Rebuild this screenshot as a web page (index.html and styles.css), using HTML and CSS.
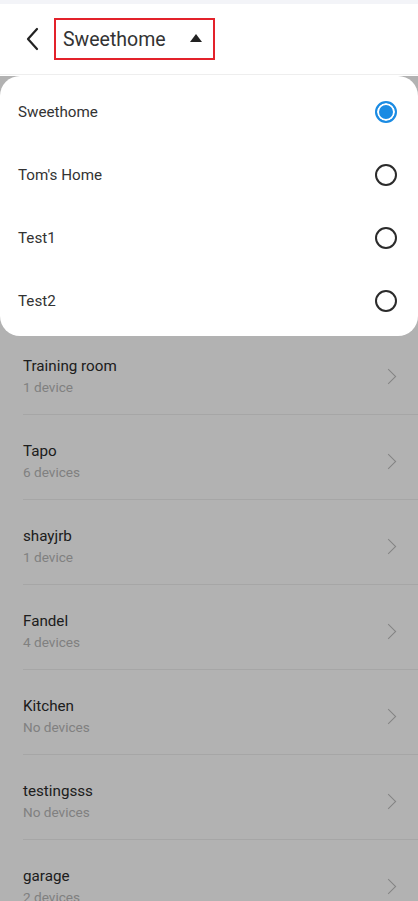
FILE: index.html
```html
<!DOCTYPE html>
<html lang="en">
<head>
  <meta charset="UTF-8" />
  <meta name="viewport" content="width=device-width, initial-scale=1.0" />
  <title>Rooms</title>
  <link rel="stylesheet" href="styles.css">
</head>
<body>
  <div class="statusbar"></div>
  <header class="topbar">
    <button class="back" aria-label="Back">
      <svg width="14" height="24" viewBox="0 0 14 24"><path d="M12 2 L3 12 L12 22" fill="none" stroke="#222" stroke-width="2.2" stroke-linecap="round" stroke-linejoin="round"/></svg>
    </button>
    <div class="home-picker">
      <span class="home-name">Sweethome</span>
      <span class="caret"></span>
    </div>
  </header>

  <div class="rooms">
    <div class="room">
      <div class="room-text"><div class="room-name">Training room</div><div class="room-count">1 device</div></div>
      <span class="chev"></span>
    </div>
    <div class="room">
      <div class="room-text"><div class="room-name">Tapo</div><div class="room-count">6 devices</div></div>
      <span class="chev"></span>
    </div>
    <div class="room">
      <div class="room-text"><div class="room-name">shayjrb</div><div class="room-count">1 device</div></div>
      <span class="chev"></span>
    </div>
    <div class="room">
      <div class="room-text"><div class="room-name">Fandel</div><div class="room-count">4 devices</div></div>
      <span class="chev"></span>
    </div>
    <div class="room">
      <div class="room-text"><div class="room-name">Kitchen</div><div class="room-count">No devices</div></div>
      <span class="chev"></span>
    </div>
    <div class="room">
      <div class="room-text"><div class="room-name">testingsss</div><div class="room-count">No devices</div></div>
      <span class="chev"></span>
    </div>
    <div class="room">
      <div class="room-text"><div class="room-name">garage</div><div class="room-count">2 devices</div></div>
      <span class="chev"></span>
    </div>
  </div>

  <div class="dim"></div>
  <div class="menu">
    <div class="menu-item"><span>Sweethome</span><span class="radio checked"></span></div>
    <div class="menu-item"><span>Tom's Home</span><span class="radio"></span></div>
    <div class="menu-item"><span>Test1</span><span class="radio"></span></div>
    <div class="menu-item"><span>Test2</span><span class="radio"></span></div>
  </div>
</body>
</html>
```

FILE: styles.css
```css
body {
  margin: 0;
  font-family: Roboto, "Noto Sans", sans-serif;
  background-color: #fff;
  color: #2b2b2b;
  height: 901px;
  overflow: hidden;
  position: relative;
}
.statusbar {
  height: 4px;
  background-color: #f3f4f8;
}
.topbar {
  height: 71px;
  display: flex;
  align-items: center;
  border-bottom: 1px solid #eeeeee;
  box-sizing: border-box;
  padding-left: 25px;
}
.back {
  border: 0;
  background: none;
  padding: 0;
  width: 14px;
  height: 24px;
  margin-right: 15px;
  display: flex;
}
.home-picker {
  width: 161px;
  height: 42px;
  box-sizing: border-box;
  border: 2px solid #e3222b;
  display: flex;
  align-items: center;
  padding-left: 7px;
  padding-right: 11px;
}
.home-name {
  flex: 1;
  font-size: 19.5px;
  color: #333;
}
.caret {
  width: 0;
  height: 0;
  border-left: 6px solid transparent;
  border-right: 6px solid transparent;
  border-bottom: 8px solid #222;
  margin-top: -3px;
}
.rooms {
  padding-top: 255px;
}
.room {
  display: flex;
  align-items: center;
  margin-left: 23px;
  padding: 25px 24px 17px 0;
  border-bottom: 1px solid #eeeeee;
  height: 42px;
}
.room-text {
  flex: 1;
}
.room-name {
  font-size: 15.2px;
  line-height: 22px;
  color: #2b2b2b;
}
.room-count {
  font-size: 13.6px;
  line-height: 20px;
  color: #b8b8b8;
}
.chev {
  width: 10px;
  height: 10px;
  border-top: 1.5px solid #bdbdbd;
  border-right: 1.5px solid #bdbdbd;
  transform: rotate(45deg);
  margin-top: 0;
}
.dim {
  position: absolute;
  left: 0;
  right: 0;
  top: 76px;
  bottom: 0;
  background-color: rgba(0, 0, 0, 0.3);
}
.menu {
  position: absolute;
  left: 0;
  right: 0;
  top: 76px;
  height: 260px;
  box-sizing: border-box;
  padding: 4px 0;
  background-color: #fff;
  border-radius: 20px;
}
.menu-item {
  height: 63px;
  display: flex;
  align-items: center;
  justify-content: space-between;
  padding: 0 21px 0 18px;
  font-size: 15.2px;
  color: #333;
}
.radio {
  width: 22px;
  height: 22px;
  box-sizing: border-box;
  border: 2px solid #2b2b2b;
  border-radius: 50%;
}
.radio.checked {
  border-color: #1a8be3;
  background-color: #1a8be3;
  box-shadow: inset 0 0 0 2px #fff;
}
```
